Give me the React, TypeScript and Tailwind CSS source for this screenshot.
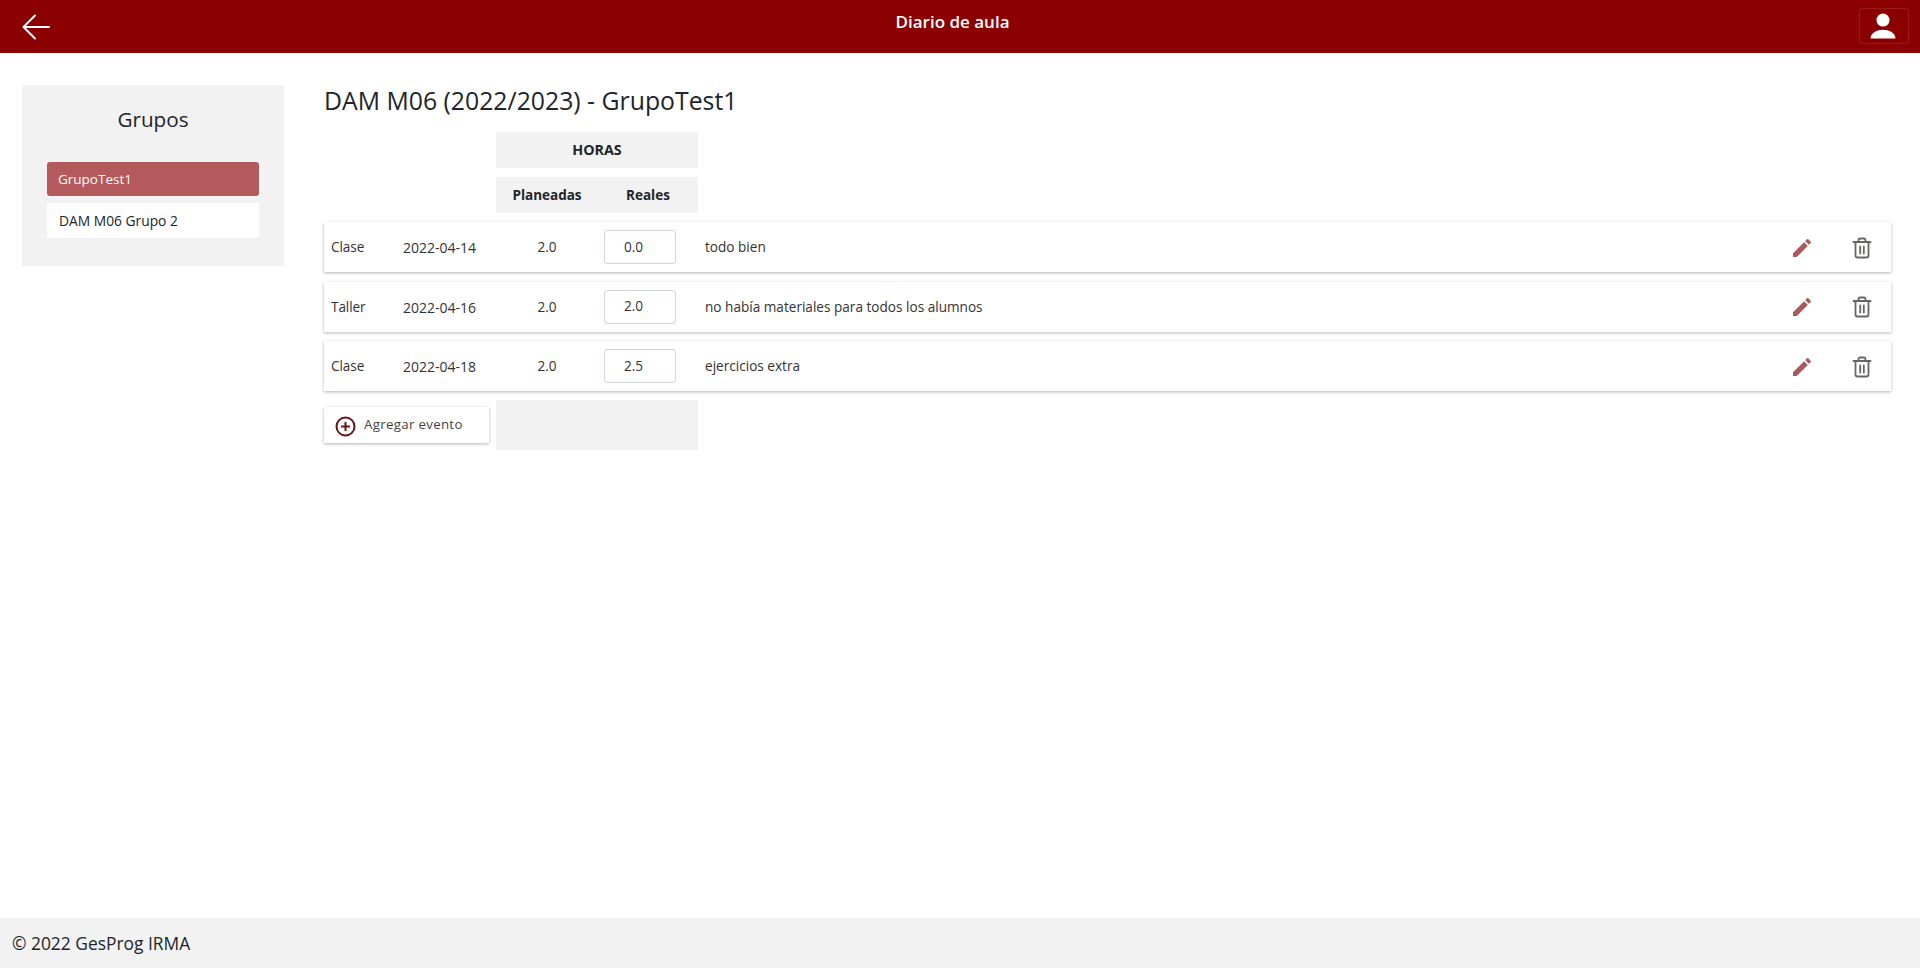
const font = "[font-family:'Open_Sans','Noto_Sans',sans-serif]";

const rows = [
  { tipo: "Clase", fecha: "2022-04-14", plan: "2.0", real: "0.0", nota: "todo bien" },
  { tipo: "Taller", fecha: "2022-04-16", plan: "2.0", real: "2.0", nota: "no había materiales para todos los alumnos" },
  { tipo: "Clase", fecha: "2022-04-18", plan: "2.0", real: "2.5", nota: "ejercicios extra" },
];

function Pencil() {
  return (
    <svg width="24" height="24" viewBox="0 0 24 24" fill="#a85a5c">
      <path d="M3 17.25V21h3.75L17.81 9.94l-3.75-3.75L3 17.25zM20.71 7.04a1 1 0 0 0 0-1.41l-2.34-2.34a1 1 0 0 0-1.41 0l-1.83 1.83 3.75 3.75 1.83-1.83z" />
    </svg>
  );
}

function Trash() {
  return (
    <svg width="24" height="24" viewBox="0 0 24 24" fill="none" stroke="#6b6464" strokeWidth="1.8" strokeLinecap="round" strokeLinejoin="round">
      <path d="M3.5 6h17" />
      <path d="M8.5 6V4a1.5 1.5 0 0 1 1.5-1.5h4A1.5 1.5 0 0 1 15.5 4v2" />
      <path d="M5.5 6v13.5a2 2 0 0 0 2 2h9a2 2 0 0 0 2-2V6" />
      <path d="M10.2 10.5v7M13.8 10.5v7" />
    </svg>
  );
}

export default function App() {
  return (
    <div className={`flex h-[968px] flex-col bg-white text-[#212529] ${font}`}>
      <header className="flex h-[53px] shrink-0 items-start bg-[#8b0000] text-white">
        <div className="w-[72px] shrink-0 pl-[21px] pt-[12px]">
          <svg width="30" height="30" viewBox="0 0 30 30" fill="none" stroke="white" strokeWidth="2" strokeLinecap="round" strokeLinejoin="round">
            <path d="M28 15H3M14 3.5 2.5 15 14 26.5" />
          </svg>
        </div>
        <div className="flex-1 pr-[26px] pt-[8px] text-center text-[17px] font-semibold leading-[28px]">Diario de aula</div>
        <div className="mr-[11px] mt-[8px] flex h-[36px] w-[50px] items-center justify-center rounded-[3px] border border-[#9a1c1c] pr-[2px]">
          <svg width="34" height="34" viewBox="0 0 24 24" fill="white">
            <circle cx="12" cy="7.8" r="4.6" />
            <path d="M3.2 20.8c0-4.2 4.6-6.2 8.8-6.2s8.8 2 8.8 6.2z" />
          </svg>
        </div>
      </header>

      <main className="flex flex-1 items-start pl-[22px] pr-[29px] pt-[32px]">
        <aside className="flex h-[181px] w-[262px] shrink-0 flex-col bg-[#f2f2f2] px-[25px]">
          <h2 className="mt-[19px] text-center text-[20.7px] font-normal leading-[30px]">Grupos</h2>
          <div className="mt-[28px] flex h-[34px] items-center rounded-[3px] bg-[#b55a5c] px-[11px] text-[13.5px] text-white">GrupoTest1</div>
          <div className="mt-[7px] flex h-[35px] items-center bg-white px-[12px] pt-[1px] text-[13.8px]">DAM M06 Grupo 2</div>
        </aside>

        <section className="ml-[40px] flex flex-1 flex-col">
          <h1 className="-mt-[2px] text-[24.8px] font-normal leading-[35px]">DAM M06 (2022/2023) - GrupoTest1</h1>
          <div className="ml-[172px] mt-[14px] flex h-[36px] w-[202px] items-center justify-center bg-[#f2f2f2] text-[14.3px] font-bold">HORAS</div>
          <div className="ml-[172px] mt-[9px] flex h-[36px] w-[202px] items-center bg-[#f2f2f2] text-[13.5px] font-bold">
            <span className="w-[102px] text-center">Planeadas</span>
            <span className="w-[100px] text-center">Reales</span>
          </div>

          <div className="mt-[9px] flex flex-col gap-[9.5px]">
            {rows.map((r) => (
              <div key={r.fecha} className="flex h-[50px] items-center bg-white pl-[7px] pt-[1px] text-[13.6px] text-[#333] shadow-[0_1px_3px_rgba(0,0,0,0.3)]">
                <span className="w-[72px] tracking-[-0.1px]">{r.tipo}</span>
                <span className="w-[100px] text-[14px]">{r.fecha}</span>
                <span className="ml-[1px] w-[86px] text-center">{r.plan}</span>
                <span className="ml-[14px] -mt-[1px] flex h-[34px] w-[72px] items-center rounded-[3px] border border-[#ced4da] pl-[19px]">{r.real}</span>
                <span className="ml-[29px] flex-1">{r.nota}</span>
                <span className="ml-[1px] flex w-[60px] justify-center"><Pencil /></span>
                <span className="flex w-[59px] justify-center"><Trash /></span>
              </div>
            ))}
          </div>

          <div className="mt-[9px] flex items-start">
            <div className="mt-[7px] flex h-[36px] w-[165px] items-center bg-white pl-[11px] text-[13.3px] text-[#444] shadow-[0_1px_3px_rgba(0,0,0,0.3)]">
              <svg className="mt-[2px]" width="21" height="21" viewBox="0 0 21 21" fill="none" stroke="#6b1414" strokeWidth="2">
                <circle cx="10.5" cy="10.5" r="9" />
                <path d="M10.5 6v9M6 10.5h9" />
              </svg>
              <span className="ml-[8px] tracking-[0.3px]">Agregar evento</span>
            </div>
            <div className="ml-[7px] h-[50px] w-[202px] bg-[#f2f2f2]" />
          </div>
        </section>
      </main>

      <footer className="flex h-[50px] shrink-0 items-center bg-[#f2f2f2] pl-[12px] text-[17.4px]">© 2022 GesProg IRMA</footer>
    </div>
  );
}
